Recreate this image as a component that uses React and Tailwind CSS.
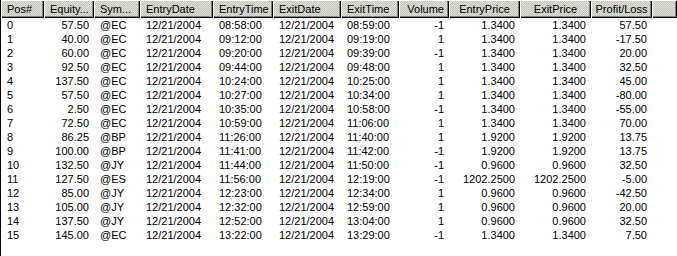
import React from "react";

const cols = [
  { h: "Pos#", w: "", ha: "left", da: "left" },
  { h: "Equity...", ha: "left", da: "right" },
  { h: "Sym...", ha: "left", da: "left" },
  { h: "EntryDate", ha: "left", da: "left" },
  { h: "EntryTime", ha: "left", da: "left" },
  { h: "ExitDate", ha: "left", da: "left" },
  { h: "ExitTime", ha: "left", da: "left" },
  { h: "Volume", ha: "right", da: "right" },
  { h: "EntryPrice", ha: "center", da: "right" },
  { h: "ExitPrice", ha: "center", da: "right" },
  { h: "Profit/Loss", ha: "center", da: "right" },
];

const rows = [
  ["0", "57.50", "@EC", "12/21/2004", "08:58:00", "12/21/2004", "08:59:00", "-1", "1.3400", "1.3400", "57.50"],
  ["1", "40.00", "@EC", "12/21/2004", "09:12:00", "12/21/2004", "09:19:00", "1", "1.3400", "1.3400", "-17.50"],
  ["2", "60.00", "@EC", "12/21/2004", "09:20:00", "12/21/2004", "09:39:00", "-1", "1.3400", "1.3400", "20.00"],
  ["3", "92.50", "@EC", "12/21/2004", "09:44:00", "12/21/2004", "09:48:00", "1", "1.3400", "1.3400", "32.50"],
  ["4", "137.50", "@EC", "12/21/2004", "10:24:00", "12/21/2004", "10:25:00", "1", "1.3400", "1.3400", "45.00"],
  ["5", "57.50", "@EC", "12/21/2004", "10:27:00", "12/21/2004", "10:34:00", "1", "1.3400", "1.3400", "-80.00"],
  ["6", "2.50", "@EC", "12/21/2004", "10:35:00", "12/21/2004", "10:58:00", "-1", "1.3400", "1.3400", "-55.00"],
  ["7", "72.50", "@EC", "12/21/2004", "10:59:00", "12/21/2004", "11:06:00", "1", "1.3400", "1.3400", "70.00"],
  ["8", "86.25", "@BP", "12/21/2004", "11:26:00", "12/21/2004", "11:40:00", "1", "1.9200", "1.9200", "13.75"],
  ["9", "100.00", "@BP", "12/21/2004", "11:41:00", "12/21/2004", "11:42:00", "-1", "1.9200", "1.9200", "13.75"],
  ["10", "132.50", "@JY", "12/21/2004", "11:44:00", "12/21/2004", "11:50:00", "-1", "0.9600", "0.9600", "32.50"],
  ["11", "127.50", "@ES", "12/21/2004", "11:56:00", "12/21/2004", "12:19:00", "-1", "1202.2500", "1202.2500", "-5.00"],
  ["12", "85.00", "@JY", "12/21/2004", "12:23:00", "12/21/2004", "12:34:00", "1", "0.9600", "0.9600", "-42.50"],
  ["13", "105.00", "@JY", "12/21/2004", "12:32:00", "12/21/2004", "12:59:00", "1", "0.9600", "0.9600", "20.00"],
  ["14", "137.50", "@JY", "12/21/2004", "12:52:00", "12/21/2004", "13:04:00", "1", "0.9600", "0.9600", "32.50"],
  ["15", "145.00", "@EC", "12/21/2004", "13:22:00", "12/21/2004", "13:29:00", "-1", "1.3400", "1.3400", "7.50"],
];

const gridCols =
  "grid grid-cols-[43px_50px_46px_73px_60px_68px_58px_50px_71px_71px_61px_1fr]";

const headerCell =
  "h-[18px] flex items-center overflow-hidden whitespace-nowrap bg-[repeating-conic-gradient(#c0c0c0_0_25%,#e4e4d4_0_50%)] bg-[length:2px_2px] shadow-[inset_1px_1px_0_#ffffff,inset_-1px_-1px_0_#000000,inset_-2px_-2px_0_#808080]";

const hAlign = {
  left: "justify-start pl-[6px]",
  right: "justify-end pr-[5px]",
  center: "justify-center",
};
const dAlign = {
  left: "text-left pl-[6px]",
  right: "text-right pr-[5px]",
};

export default function App() {
  return (
    <div className="w-[677px] h-[256px] overflow-hidden bg-white border-l border-black font-['Liberation_Sans',Arial,sans-serif] text-[11px] text-black">
      <div className={gridCols}>
        {cols.map((c) => (
          <div key={c.h} className={`${headerCell} ${hAlign[c.ha]}`}>
            <span className="leading-none">{c.h}</span>
          </div>
        ))}
        <div className={headerCell}></div>
      </div>
      <div className="flex flex-col">
        {rows.map((r, i) => (
          <div key={i} className={`${gridCols} h-[14px] leading-[14px]`}>
            {r.map((v, j) => (
              <div key={j} className={`whitespace-nowrap overflow-hidden ${dAlign[cols[j].da]}`}>
                {v}
              </div>
            ))}
            <div></div>
          </div>
        ))}
      </div>
    </div>
  );
}
